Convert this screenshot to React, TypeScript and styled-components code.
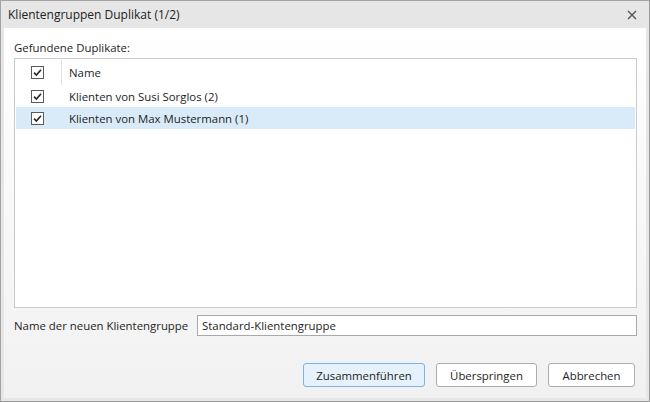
import styled, { createGlobalStyle } from 'styled-components';

const GlobalStyle = createGlobalStyle`
  html, body {
    margin: 0;
    padding: 0;
    background: #fff;
  }
  * {
    box-sizing: border-box;
  }
`;

const Window = styled.div`
  width: 650px;
  height: 402px;
  display: flex;
  flex-direction: column;
  border: 1px solid #a3a3a3;
  border-right-color: #9c9c9c;
  border-bottom-color: #9c9c9c;
  background: #e6e6e6;
  padding: 0 3px 3px 3px;
  font-family: 'Open Sans', 'Noto Sans', sans-serif;
  font-size: 11.4px;
  color: #1e1e1e;
`;

const TitleBar = styled.div`
  height: 27px;
  display: flex;
  align-items: center;
  justify-content: space-between;
  padding: 0 6px 0 4px;
`;

const Title = styled.span`
  font-size: 12px;
  color: #222;
`;

const CloseButton = styled.span`
  width: 16px;
  height: 16px;
  display: flex;
  align-items: center;
  justify-content: center;
`;

const Client = styled.div`
  flex: 1;
  display: flex;
  flex-direction: column;
  background: linear-gradient(#ffffff, #f1f1f1);
  padding: 11px 9px 11px 10px;
`;

const SectionLabel = styled.div`
  height: 19px;
  line-height: 17px;
`;

const ListBox = styled.div`
  flex: 1;
  background: #fff;
  border: 1px solid #cbcbcb;
  padding: 1px;
`;

const Row = styled.div<{ $selected?: boolean; $header?: boolean }>`
  display: flex;
  align-items: center;
  height: ${(p) => (p.$header ? '25px' : '22px')};
  background: ${(p) => (p.$selected ? '#d9ebf9' : 'transparent')};
`;

const CheckCell = styled.div<{ $header?: boolean }>`
  width: 46px;
  height: 100%;
  display: flex;
  align-items: center;
  justify-content: center;
  padding-right: 2px;
  border-right: ${(p) => (p.$header ? '1px solid #e3e3e3' : '1px solid transparent')};
`;

const NameCell = styled.div`
  padding-left: 7px;
  white-space: nowrap;
`;

const InputRow = styled.div`
  display: flex;
  align-items: center;
  margin-top: 7px;
  height: 21px;
`;

const InputLabel = styled.label`
  width: 183px;
  flex-shrink: 0;
  white-space: nowrap;
`;

const TextInput = styled.input`
  flex: 1;
  min-width: 0;
  height: 21px;
  border: 1px solid #a9a9a9;
  padding: 0 4px;
  font-family: inherit;
  font-size: 11.4px;
  color: #1e1e1e;
  background: #fff;
  outline: none;
`;

const ButtonBar = styled.div`
  margin-top: 27px;
  display: flex;
  justify-content: flex-end;
  gap: 11px;
  padding-right: 2px;
`;

const Button = styled.button<{ $primary?: boolean; $width: number }>`
  height: 24px;
  padding: 0;
  width: ${(p) => p.$width}px;
  border-radius: 3px;
  border: 1px solid ${(p) => (p.$primary ? '#7eb4ea' : '#adadad')};
  background: ${(p) => (p.$primary ? '#e5f1fb' : '#fff')};
  font-family: inherit;
  font-size: 11.4px;
  color: #1e1e1e;
`;

function Check() {
  return (
    <svg width="13" height="13" viewBox="0 0 13 13">
      <rect x="0.5" y="0.5" width="12" height="12" fill="#fff" stroke="#5a5a5a" />
      <path d="M3 6.6 L5.4 9 L10 3.8" fill="none" stroke="#262626" strokeWidth="1.6" />
    </svg>
  );
}

const rows = ['Klienten von Susi Sorglos (2)', 'Klienten von Max Mustermann (1)'];

export default function App() {
  return (
    <>
      <GlobalStyle />
      <Window>
        <TitleBar>
          <Title>Klientengruppen Duplikat (1/2)</Title>
          <CloseButton>
            <svg width="10" height="10" viewBox="0 0 10 10">
              <path d="M1 1 L9 9 M9 1 L1 9" stroke="#555" strokeWidth="1.4" />
            </svg>
          </CloseButton>
        </TitleBar>
        <Client>
          <SectionLabel>Gefundene Duplikate:</SectionLabel>
          <ListBox>
            <Row $header>
              <CheckCell $header>
                <Check />
              </CheckCell>
              <NameCell>Name</NameCell>
            </Row>
            {rows.map((r, i) => (
              <Row key={r} $selected={i === 1}>
                <CheckCell>
                  <Check />
                </CheckCell>
                <NameCell>{r}</NameCell>
              </Row>
            ))}
          </ListBox>
          <InputRow>
            <InputLabel>Name der neuen Klientengruppe</InputLabel>
            <TextInput defaultValue="Standard-Klientengruppe" />
          </InputRow>
          <ButtonBar>
            <Button $primary $width={122}>Zusammenführen</Button>
            <Button $width={101}>Überspringen</Button>
            <Button $width={87}>Abbrechen</Button>
          </ButtonBar>
        </Client>
      </Window>
    </>
  );
}
